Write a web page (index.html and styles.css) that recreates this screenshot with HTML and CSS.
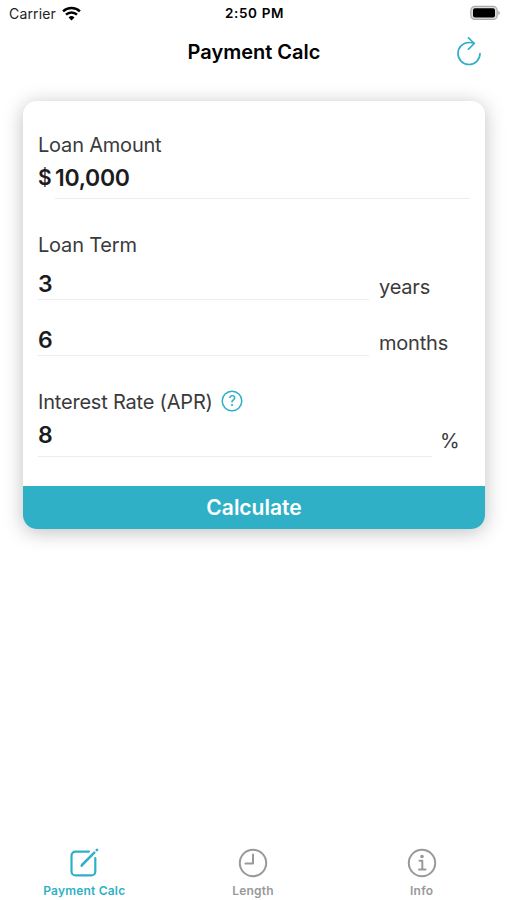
FILE: index.html
```html
<!DOCTYPE html>
<html lang="en">
<head>
    <meta charset="UTF-8">
    <meta name="viewport" content="width=device-width, initial-scale=1.0">
    <title>Payment Calc</title>
    <link rel="stylesheet" href="styles.css">
</head>
<body>
    <div class="status-bar">
        <div class="carrier">
            <span>Carrier</span>
            <svg width="19" height="15" viewBox="0 0 18 14" fill="none" stroke="#000" stroke-width="2.3">
                <path d="M1 5.1a11.5 11.5 0 0 1 16 0"/>
                <path d="M3.8 8.1a7.500 7.500 0 0 1 10.4 0"/>
                <path d="M9 13.6L6.2 10.8a4 4 0 0 1 5.6 0z" fill="#000" stroke="none"/>
            </svg>
        </div>
        <div class="time">2:50 PM</div>
        <div class="battery">
            <svg width="31" height="16" viewBox="0 0 31 16">
                <rect x="1.8" y="1.4" width="26.4" height="13" rx="4" fill="#ddd" stroke="#aaa" stroke-width="1.2"/>
                <rect x="4" y="3.3" width="22" height="9.2" rx="2" fill="#000"/>
                <path d="M29.3 5.8c2 .8 2 3.4 0 4.2z" fill="#aaa"/>
            </svg>
        </div>
    </div>

    <header class="nav-bar">
        <h1>Payment Calc</h1>
        <button class="reset-btn" aria-label="Reset">
            <svg width="26" height="30" viewBox="0 0 26 30" fill="none" stroke="#30b0c7" stroke-width="1.7" stroke-linecap="round" stroke-linejoin="round">
                <path d="M24 16.5A11 11 0 1 1 13 5.500c1.800 0 3.500.2 5 .6"/>
                <path d="M12.500.9L18.300 6.500L12.500 12.200"/>
            </svg>
        </button>
    </header>

    <main class="card">
        <div class="form">
            <label class="label" for="amount">Loan Amount</label>
            <div class="field amount">
                <span class="currency">$</span>
                <input type="text" id="amount" value="10,000">
            </div>

            <label class="label" for="years">Loan Term</label>
            <div class="field years">
                <input type="text" id="years" value="3">
                <span class="unit">years</span>
            </div>
            <div class="field months">
                <input type="text" id="months" value="6">
                <span class="unit">months</span>
            </div>

            <label class="label" for="rate">
                Interest Rate (APR)
                <svg class="help-icon" width="22" height="22" viewBox="0 0 22 22">
                    <circle cx="11" cy="11" r="9.800" fill="none" stroke="#30b0c7" stroke-width="1.500"/>
                    <text x="11" y="16" class="help">?</text>
                </svg>
            </label>
            <div class="field rate">
                <input type="text" id="rate" value="8">
                <span class="unit">%</span>
            </div>
        </div>
        <button class="calculate-btn">Calculate</button>
    </main>

    <nav class="tab-bar">
        <div class="tab active">
            <svg width="30" height="30" viewBox="0 0 30 30" fill="none" stroke="currentColor" stroke-width="2.200" stroke-linecap="round">
                <path d="M20 3.600H6.500a4 4 0 0 0-4 4v15.800a4 4 0 0 0 4 4h15.800a4 4 0 0 0 4-4V10"/>
                <path d="M13 17L25.300 4.600" stroke-width="2.500"/>
                <path d="M12 18.100l.5-1.700 1.200 1.200z" stroke-width="1"/>
                <path d="M27.800 2.100l.2-.2" stroke-width="2.700"/>
            </svg>
            <span>Payment Calc</span>
        </div>
        <div class="tab">
            <svg width="30" height="30" viewBox="0 0 30 30" fill="none" stroke="currentColor" stroke-width="2" stroke-linecap="round" stroke-linejoin="round">
                <circle cx="15" cy="15" r="13.200"/>
                <path d="M15 6.500v9H7.500"/>
            </svg>
            <span>Length</span>
        </div>
        <div class="tab">
            <svg width="30" height="30" viewBox="0 0 30 30" fill="none" stroke="currentColor" stroke-width="2" stroke-linecap="round" stroke-linejoin="round">
                <circle cx="15" cy="15" r="13.200"/>
                <path d="M12.500 12.800h2.800v8.700M12 21.500h6.500"/>
                <circle cx="15" cy="8.500" r="1.800" fill="currentColor" stroke="none"/>
            </svg>
            <span>Info</span>
        </div>
    </nav>
</body>
</html>
```
FILE: styles.css
```css
* {
    box-sizing: border-box;
}
body {
    margin: 0;
    height: 100vh;
    display: flex;
    flex-direction: column;
    overflow: hidden;
    background-color: #fff;
    color: #000;
    font-family: Inter, "Liberation Sans", sans-serif;
}
button {
    border: none;
    padding: 0;
    background: none;
    font-family: inherit;
    cursor: pointer;
}
svg {
    display: block;
}
.status-bar {
    display: grid;
    grid-template-columns: 1fr auto 1fr;
    align-items: center;
    height: 26px;
    padding: 0 7px 0 9px;
    font-size: 14px;
}
.carrier {
    display: flex;
    align-items: center;
    gap: 6px;
    letter-spacing: 0.15px;
    color: #222;
}
.time {
    font-weight: 600;
    font-size: 13.5px;
    letter-spacing: 0.65px;
}
.battery {
    justify-self: end;
}
.nav-bar {
    display: grid;
    grid-template-columns: 1fr auto 1fr;
    align-items: center;
    height: 52px;
    padding: 0 25px;
}
.nav-bar h1 {
    grid-column: 2;
    margin: 0 0 0 1px;
    font-size: 20px;
    font-weight: 600;
}
.reset-btn {
    justify-self: end;
}
.card {
    margin: 23px 22px 0 23px;
    border-radius: 14px;
    background-color: #fff;
    box-shadow: 0 3px 20px rgba(0, 0, 0, 0.25);
}
.form {
    height: 385px;
    padding: 32px 15px 0;
}
.label {
    display: flex;
    align-items: center;
    gap: 7px;
    height: 24px;
    font-size: 20px;
    line-height: 24px;
    letter-spacing: -0.2px;
    color: #3a3a3c;
}
.help-icon {
    margin: 0 0 3px 1px;
}
.help {
    font-size: 14px;
    font-weight: 500;
    text-anchor: middle;
    fill: #30b0c7;
}
.field {
    display: flex;
    font-size: 23px;
    font-weight: 600;
    line-height: 28px;
    letter-spacing: -0.3px;
    color: #1c1c1e;
}
.field input {
    flex: 1;
    min-width: 0;
    height: 100%;
    padding: 0;
    border: none;
    border-bottom: 1px solid #ececee;
    border-radius: 0;
    background: none;
    font: inherit;
    letter-spacing: inherit;
    color: inherit;
    outline: none;
}
.amount {
    height: 35px;
    margin: 7px 0 34px;
}
.currency {
    width: 17px;
    font-size: 21px;
}
.amount input, .rate input {
    padding-bottom: 6px;
}
.years {
    height: 30px;
    margin-top: 13px;
}
.months {
    height: 30px;
    margin: 26px 0 34px;
}
.years input, .months input {
    padding-bottom: 2px;
}
.rate {
    height: 36px;
    margin-top: 7px;
}
.rate input {
    padding-bottom: 7px;
}
.unit {
    align-self: flex-end;
    width: 101px;
    padding: 0 0 1px 10px;
    font-size: 20px;
    font-weight: 400;
    line-height: 24px;
    letter-spacing: -0.2px;
    color: #3a3a3c;
}
.rate .unit {
    width: 38px;
    padding: 0 0 4px 8px;
}
.calculate-btn {
    display: block;
    width: 100%;
    height: 43px;
    border-radius: 0 0 14px 14px;
    background-color: #30b0c7;
    color: #fff;
    font-size: 21px;
    font-weight: 600;
}
.tab-bar {
    display: grid;
    grid-template-columns: repeat(3, 1fr);
    height: 52px;
    margin: auto 1px 0 0;
}
.tab {
    display: flex;
    flex-direction: column;
    align-items: center;
    gap: 5px;
    font-size: 12px;
    font-weight: 600;
    line-height: 16px;
    letter-spacing: 0.2px;
    color: #999;
}
.tab.active {
    color: #30b0c7;
}
```
